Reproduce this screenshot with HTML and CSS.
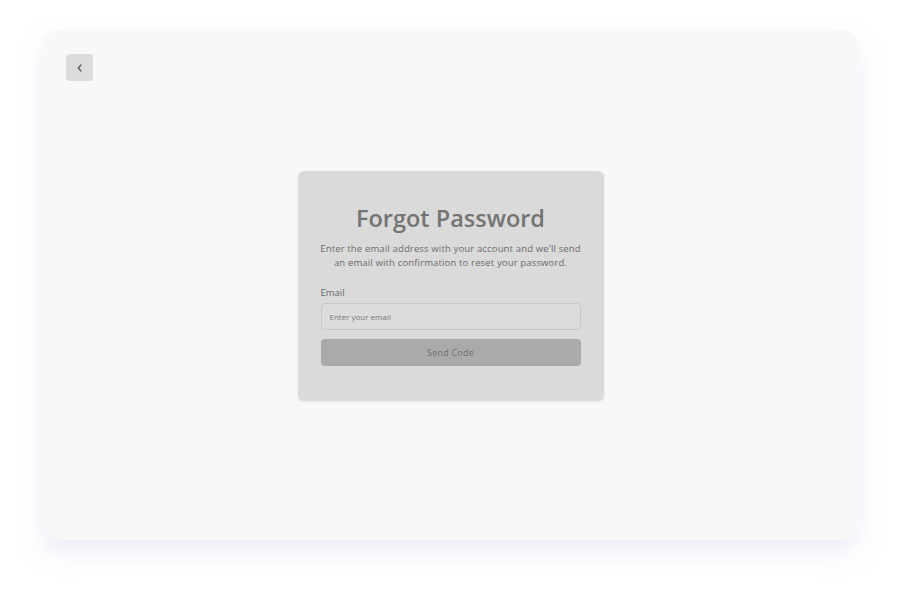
FILE: index.html
```html
<!DOCTYPE html>
<html lang="en">
<head>
<meta charset="UTF-8">
<meta name="viewport" content="width=device-width, initial-scale=1.0">
<title>Forgot Password</title>
<link rel="stylesheet" href="styles.css">
</head>
<body>
    <div class="page">
        <main class="panel">
            <div class="top-row">
                <button class="back-btn" aria-label="Back">
                    <svg width="10" height="10" viewBox="0 0 10 10"><path d="M6 2 L3.2 5 L6 8" fill="none" stroke="#555" stroke-width="1.2" stroke-linecap="round" stroke-linejoin="round"/></svg>
                </button>
            </div>

            <section class="card">
                <h1>Forgot Password</h1>
                <p class="intro">Enter the email address with your account and we'll send an email with confirmation to reset your password.</p>
                <label class="field-label" for="email">Email</label>
                <input type="email" id="email" class="field" placeholder="Enter your email">
                <button class="send-btn">Send Code</button>
            </section>

            <div class="bottom-row"></div>
        </main>
    </div>
</body>
</html>
```

FILE: styles.css
```css
body {
    margin: 0;
    background: #ffffff;
    font-family: "Open Sans", Arial, sans-serif;
}

.page {
    padding: 30px 43px 55px;
}

.panel {
    height: 508px;
    padding: 2px 23px 0;
    background: #f8f8f8;
    border-radius: 16px;
    box-shadow: 0 12px 24px rgba(200, 205, 230, 0.35);
    display: grid;
    grid-template-rows: 1fr auto 1fr;
    justify-items: center;
}

.top-row {
    justify-self: start;
    padding-top: 22px;
}

.back-btn {
    width: 27px;
    height: 27px;
    border: none;
    border-radius: 4px;
    background: #dcdcdc;
    display: flex;
    align-items: center;
    justify-content: center;
    padding: 0;
}

.card {
    width: 260px;
    padding: 29px 23px 35px;
    background: #dadada;
    border-radius: 6px;
    box-shadow: 0 1px 3px rgba(0, 0, 0, 0.08);
    display: flex;
    flex-direction: column;
}

.card h1 {
    margin: 0;
    text-align: center;
    font-size: 23.5px;
    font-weight: 600;
    color: #747474;
    line-height: 36px;
}

.intro {
    margin: 6px -6px 16px;
    text-align: center;
    font-size: 9.5px;
    line-height: 14px;
    letter-spacing: 0.15px;
    color: #6a6a6a;
}

.field-label {
    font-size: 9.5px;
    color: #666;
    margin-bottom: 4px;
}

.field {
    height: 27px;
    box-sizing: border-box;
    border: 1px solid #c6c6c6;
    border-radius: 4px;
    background: #dcdcdc;
    padding: 0 8px;
    font-family: inherit;
    font-size: 8px;
    color: #777;
}

.field::placeholder {
    color: #7a7a7a;
}

.send-btn {
    margin-top: 9px;
    height: 27px;
    border: none;
    border-radius: 4px;
    background: #aaaaaa;
    color: #6e6e6e;
    font-family: inherit;
    font-size: 9px;
    letter-spacing: 0.2px;
}
```
